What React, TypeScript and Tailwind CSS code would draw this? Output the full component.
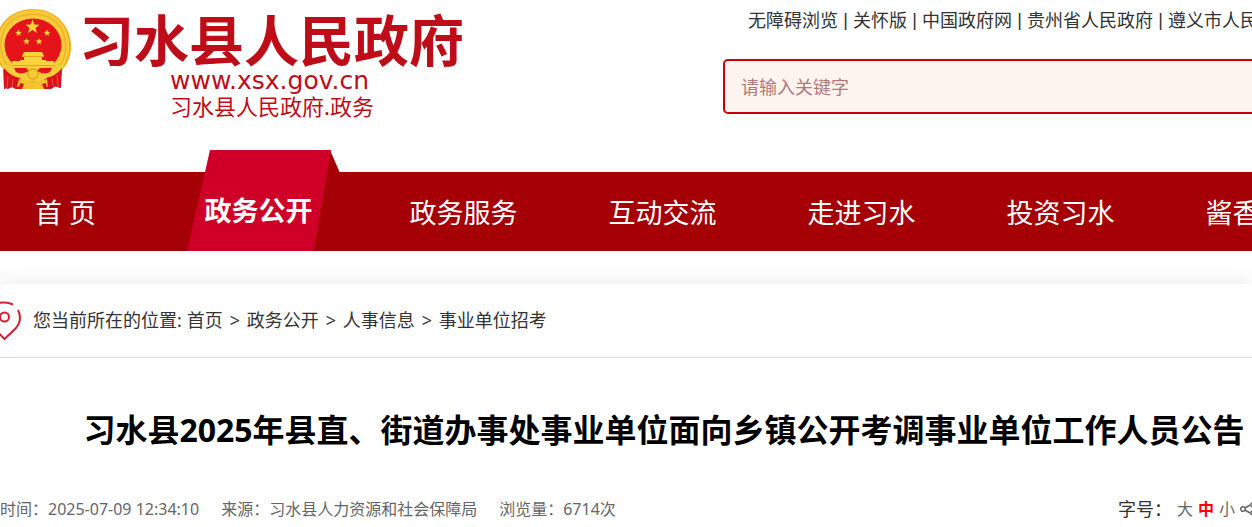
import React, { useState } from "react";

const topLinks = ["无障碍浏览", "关怀版", "中国政府网", "贵州省人民政府", "遵义市人民政府"];

const navItems = ["首 页", "政务公开", "政务服务", "互动交流", "走进习水", "投资习水", "酱香习水"];

const crumbs = ["首页", "政务公开", "人事信息", "事业单位招考"];

const sizes = ["大", "中", "小"];

const STAR = "M0 -10 L2.6 -3.2 9.5 -3.1 4 1.2 5.9 8.1 0 4.1 -5.9 8.1 -4 1.2 -9.5 -3.1 -2.6 -3.2Z";

function Emblem() {
    return (
        <svg className="h-[82px] w-[72px] shrink-0" viewBox="0 8 72 82" aria-hidden="true">
            <path d="M3 66 H62 L61 88 56 86 51 89 H16 L12 87 4 89Z" fill="#d9131c" />
            <path d="M33 9 C55 9 71 25 71 47 C71 58 66 68 58 73 H8 C0 68 -5 58 -5 47 C-5 25 11 9 33 9Z" fill="#eeb022" />
            <path d="M33 10 C54 10 69 26 69 46 C69 57 65 66 57 71 H9 C1 66 -3 57 -3 46 C-3 26 12 10 33 10Z" fill="#f8cc38" />
            <path d="M8 66 C-2 55 -1 34 8 24 C19 11 47 11 58 24 C68 35 68 56 59 66" fill="none" stroke="#eab32b" strokeWidth="1.500" />
            <ellipse cx="33" cy="45" rx="28.500" ry="26.500" fill="#e5141b" />
            <g fill="#fbd33c">
                <path d={STAR} transform="translate(32.5 27) scale(.75)" />
                <path d={STAR} transform="translate(18.5 33) scale(.36)" />
                <path d={STAR} transform="translate(47 33) scale(.36)" />
                <path d={STAR} transform="translate(26.5 41.5) scale(.36)" />
                <path d={STAR} transform="translate(39 41.5) scale(.36)" />
                <path d="M24 52 H42 L44 56 H42 V60 H46 V61 H54 V66 H12 V61 H20 V60 H24 V56 H22Z" />
            </g>
            <path d="M22 56.500 H44 M12 65.500 H55" stroke="#e6a51d" />
            <path d="M1 60 C5 65 8 66 14 66 H52 C59 66 63 64 66 60 L63 69 C58 74 54 77 47 78 L42 81 H24 L18 78 C11 77 7 74 3 69Z" fill="#f8cc38" />
            <path d="M14 68 H26 L29 71 C24 74 19 74 16 72Z M52 68 H40 L37 71 C42 74 47 74 50 72Z" fill="#e5141b" />
            <path d="M4 68 C9 74 14 77 20 78 L16 89 12 87 8 89 4 87Z M62 68 C57 74 52 77 46 78 L50 89 54 86 60 88Z" fill="#d9131c" />
            <path d="M8 76 L7 88 M13 79 L12 87 M57 75 L58 87 M52 78 L53 86" stroke="#f0473c" />
            <path d="M19 79 C28 82 38 82 47 79 L48 87 C42 84 24 84 17 87Z" fill="#f5c32c" />
            <path d="M20 83 C28 85 38 85 46 83 L47 89 H19Z" fill="#d9131c" />
            <path d="M24 84 H42 L44 89 H22Z" fill="#f5c32c" />
            <circle cx="33" cy="74" r="5" fill="#f8cc38" stroke="#e6a51d" strokeWidth="1.500" />
        </svg>
    );
}

function Header() {
    return (
        <header className="flex h-[150px] items-start">
            <a href="#" className="flex w-[723px] shrink-0 items-start pt-2 text-[#be0d19]">
                <Emblem />
                <span className="ml-[7px] block pt-[3px]">
                    <span className="block text-[55px] font-bold leading-[58px]">习水县人民政府</span>
                    <span className="ml-[91px] block font-['DejaVu_Sans'] text-[25px] leading-[24px]">www.xsx.gov.cn</span>
                    <span className="ml-[91px] block text-[22px] leading-[26px]">习水县人民政府.政务</span>
                </span>
            </a>
            <div className="min-w-0 flex-1">
                <div className="ml-[25px] flex whitespace-nowrap pt-[7px] text-[18px] leading-[26px] text-[#333]">
                    {topLinks.map((link, i) => (
                        <React.Fragment key={link}>
                            {i > 0 && <span className="w-[15px] shrink-0 text-center font-['Liberation_Sans']">|</span>}
                            <a href="#" className="shrink-0">{link}</a>
                        </React.Fragment>
                    ))}
                </div>
                <input
                    type="text"
                    aria-label="请输入关键字"
                    placeholder="请输入关键字"
                    className="mt-[26px] h-[55px] w-[calc(100%+40px)] rounded-[5px] border-2 border-[#c7000b] bg-[#fef4ef] px-4 text-[18px] placeholder:text-[#b07a7a]"
                />
            </div>
        </header>
    );
}

function Nav() {
    return (
        <nav className="mt-[22px] h-[79px] bg-[#a40006] text-[27px] leading-[36px] text-white">
            <ul className="-ml-[34px] flex h-full">
                {navItems.map((item) =>
                    item === "政务公开" ? (
                        <li key={item} className="relative flex w-[199px] shrink-0 items-center justify-center pr-3 pb-[2px] font-bold">
                            <svg className="absolute bottom-0 left-[22px] h-[101px] w-[153px]" viewBox="0 0 153 101" aria-hidden="true">
                                <path d="M143 0 L153 23 126 101Z" fill="#a40006" />
                                <path d="M23 0 H144 L127 101 H0Z" fill="#ce0028" />
                            </svg>
                            <a href="#" className="relative">{item}</a>
                        </li>
                    ) : (
                        <li key={item} className="flex w-[199px] shrink-0 items-center justify-center pt-[2px]">
                            <a href="#">{item}</a>
                        </li>
                    )
                )}
            </ul>
        </nav>
    );
}

function Breadcrumb() {
    return (
        <div className="flex h-[74px] items-center border-b border-[#ddd] text-[18px] text-[#333]">
            <svg className="h-[40px] w-[22px] shrink-0" viewBox="0 0 22 40" fill="none" stroke="#cf2232" strokeWidth="2" aria-hidden="true">
                <path d="M-8 6 C-3 1 6 0 13 3.500 M18 9 C21.500 16 20 22 16 27 L4.500 38 -8 25" />
                <circle cx="4.500" cy="16" r="4.500" />
            </svg>
            <span className="ml-[11px] mr-[5px]">您当前所在的位置:</span>
            {crumbs.map((crumb, i) => (
                <React.Fragment key={crumb}>
                    {i > 0 && <span className="w-6 text-center">&gt;</span>}
                    <a href="#">{crumb}</a>
                </React.Fragment>
            ))}
        </div>
    );
}

export default function App() {
    const [size, setSize] = useState("中");

    return (
        <div className="overflow-hidden whitespace-nowrap bg-white font-['Noto_Sans','Noto_Sans_CJK_SC',sans-serif]">
            <Header />
            <Nav />
            <main className="mt-[33px] bg-white shadow-[0_0_20px_rgba(0,0,0,0.1)]">
                <Breadcrumb />
                <h1 className="ml-[76px] mt-[48px] text-center text-[32px] font-bold leading-[48px] text-black">
                    习水县2025年县直、街道办事处事业单位面向乡镇公开考调事业单位工作人员公告
                </h1>
                <div className="mt-[41px] flex h-8 items-start justify-between text-[16px] leading-[28px] text-[#666]">
                    <div className="flex gap-[22px]">
                        <span>时间：2025-07-09 12:34:10</span>
                        <span>来源：习水县人力资源和社会保障局</span>
                        <span>浏览量：6714次</span>
                    </div>
                    <div className="flex items-center">
                        <span className="mr-[5px] text-[18px] text-[#333]">字号：</span>
                        <div className="flex gap-[5px]">
                            {sizes.map((s) => (
                                <button key={s} onClick={() => setSize(s)} className={s === size ? "font-bold text-[#f00]" : ""}>
                                    {s}
                                </button>
                            ))}
                        </div>
                        <svg className="ml-[5px] h-[14px] w-[12px]" viewBox="0 0 12 14" fill="none" stroke="#666" strokeWidth="1.500" aria-hidden="true">
                            <circle cx="3" cy="7" r="2.300" />
                            <path d="M5 6 L10 3 M5 8 L10 11" />
                            <path d="M12 1 A2.300 2.300 0 0 0 12 5 M12 9 A2.300 2.300 0 0 0 12 13" />
                        </svg>
                    </div>
                </div>
            </main>
        </div>
    );
}
